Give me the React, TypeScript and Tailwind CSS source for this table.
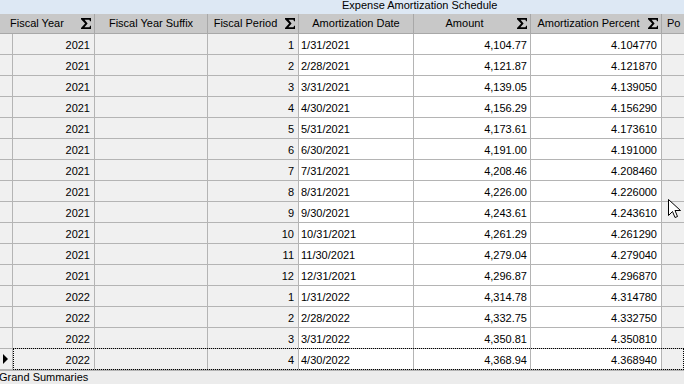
import React from 'react';

const rows = [
  ['2021', '1', '1/31/2021', '4,104.77', '4.104770'],
  ['2021', '2', '2/28/2021', '4,121.87', '4.121870'],
  ['2021', '3', '3/31/2021', '4,139.05', '4.139050'],
  ['2021', '4', '4/30/2021', '4,156.29', '4.156290'],
  ['2021', '5', '5/31/2021', '4,173.61', '4.173610'],
  ['2021', '6', '6/30/2021', '4,191.00', '4.191000'],
  ['2021', '7', '7/31/2021', '4,208.46', '4.208460'],
  ['2021', '8', '8/31/2021', '4,226.00', '4.226000'],
  ['2021', '9', '9/30/2021', '4,243.61', '4.243610'],
  ['2021', '10', '10/31/2021', '4,261.29', '4.261290'],
  ['2021', '11', '11/30/2021', '4,279.04', '4.279040'],
  ['2021', '12', '12/31/2021', '4,296.87', '4.296870'],
  ['2022', '1', '1/31/2022', '4,314.78', '4.314780'],
  ['2022', '2', '2/28/2022', '4,332.75', '4.332750'],
  ['2022', '3', '3/31/2022', '4,350.81', '4.350810'],
  ['2022', '4', '4/30/2022', '4,368.94', '4.368940'],
];

const cols = 'grid grid-cols-[13px_82px_113px_91px_115px_117px_131px_1fr]';

const Sigma = () => (
  <svg width="10" height="11" viewBox="0 0 10 11" className="shrink-0">
    <path d="M0 0H10V3.2H9L8.4 1.8H3.6L6.6 5.5L3.4 9.2H8.5L9.1 7.8H10V11H0V9.9L4.1 5.5L0 1.2Z" fill="#000" />
  </svg>
);

const HeadCell = ({ label, sigma, className = '' }: { label: string; sigma?: boolean; className?: string }) => (
  <div className={`flex items-center border-r border-[#a8a8a8] h-full ${className}`}>
    <span className="flex-1 text-center whitespace-nowrap overflow-hidden">{label}</span>
    {sigma && <div className="pr-[3px] pl-[2px]"><Sigma /></div>}
  </div>
);

const App = () => {
  return (
    <div className="w-[684px] h-[384px] overflow-hidden bg-[#ececec] text-[11px] text-black relative" style={{ fontFamily: '"Liberation Sans", Arial, sans-serif' }}>
      {/* caption */}
      <div className="h-[14px] bg-[#dde8f4] pl-[342px] leading-[11px] whitespace-nowrap">
        Expense Amortization Schedule
      </div>

      {/* header */}
      <div className={`${cols} h-[20px] bg-[#c8c8c8] border-b border-[#a8a8a8]`}>
        <div className="col-span-2 flex items-center border-r border-[#a8a8a8] pl-[10px] pr-[3px]">
          <span className="flex-1">Fiscal Year</span>
          <Sigma />
        </div>
        <HeadCell label="Fiscal Year Suffix" />
        <HeadCell label="Fiscal Period" sigma />
        <HeadCell label="Amortization Date" />
        <HeadCell label="Amount" sigma />
        <HeadCell label="Amortization Percent" sigma />
        <div className="flex items-center pl-[5px] whitespace-nowrap overflow-hidden">Po</div>
      </div>

      {/* rows */}
      {rows.map((r, i) => (
        <div key={i} className={`${cols} h-[21px] relative`}>
          <div className="bg-[#f0f0f0] border-r border-b border-[#b4b4b4] flex items-center pl-[3px]">
            {i === rows.length - 1 && (
              <svg width="6" height="10" viewBox="0 0 6 10"><path d="M0 0L5 5L0 10Z" fill="#000" /></svg>
            )}
          </div>
          <div className="bg-[#f0f0f0] border-r border-b border-[#b4b4b4] text-right pr-[4px] pt-[3px]">{r[0]}</div>
          <div className="bg-[#f0f0f0] border-r border-b border-[#b4b4b4]" />
          <div className="bg-[#f0f0f0] border-r border-b border-[#b4b4b4] text-right pr-[4px] pt-[3px]">{r[1]}</div>
          <div className="bg-white border-r border-b border-[#b4b4b4] pl-[2px] pt-[3px]">{r[2]}</div>
          <div className="bg-white border-r border-b border-[#b4b4b4] text-right pr-[3px] pt-[3px]">{r[3]}</div>
          <div className="bg-white border-r border-b border-[#b4b4b4] text-right pr-[4px] pt-[3px]">{r[4]}</div>
          <div className="bg-[#f0f0f0] border-b border-[#b4b4b4]" />
          {i === rows.length - 1 && (
            <div className="absolute left-[13px] right-0 top-[-1px] bottom-0 border border-dotted border-black pointer-events-none" />
          )}
        </div>
      ))}

      {/* footer */}
      <div className="h-[14px] border-t border-[#b4b4b4] bg-[#ececec] -ml-[1px] leading-[13px] whitespace-nowrap">
        Grand Summaries
      </div>

      {/* mouse pointer */}
      <svg className="absolute left-[668px] top-[199px]" width="13" height="20" viewBox="0 0 13 20">
        <path d="M0.5 0.5V16.5L4.5 12.5L7 18.5L9.5 17.5L7 11.5H12.5Z" fill="#fff" stroke="#000" strokeWidth="1" strokeLinejoin="miter" />
      </svg>
    </div>
  );
};

export default App;
